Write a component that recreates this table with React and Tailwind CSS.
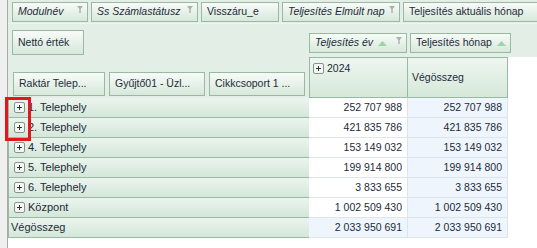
import clsx from 'clsx'

const rows = [
  { name: '1. Telephely', v: '252 707 988' },
  { name: '2. Telephely', v: '421 835 786' },
  { name: '4. Telephely', v: '153 149 032' },
  { name: '5. Telephely', v: '199 914 800' },
  { name: '6. Telephely', v: '3 833 655' },
  { name: 'Központ', v: '1 002 509 430' },
]

const Funnel = () => (
  <svg width="6" height="7" viewBox="0 0 6 7" className="absolute right-[4px] top-[3px]">
    <path d="M0 0h6L3.7 3v4H2.3V3z" fill="#a9b3ab" />
  </svg>
)

const SortUp = () => (
  <svg width="9" height="5" viewBox="0 0 9 5" className="ml-[5px] shrink-0">
    <path d="M0 5L4.5 0L9 5z" fill="#9cd5a7" />
  </svg>
)

const PlusBox = () => (
  <svg width="11" height="11" viewBox="0 0 11 11" className="shrink-0">
    <rect x="0.5" y="0.5" width="10" height="10" rx="1.5" fill="#f3f6f4" stroke="#87928a" />
    <path d="M3 5.5h5M5.5 3v5" stroke="#2c3a32" />
  </svg>
)

function FieldButton({ label, italic, w, h = 'h-[20px]', filter, sort }) {
  return (
    <div className={clsx(
      'relative flex shrink-0 items-center overflow-hidden whitespace-nowrap border border-[#9ab9a3] bg-gradient-to-b from-[#f7fbf8] to-[#d7e8db] pl-[5px]',
      w, h, italic && 'italic'
    )}>
      <span>{label}</span>
      {sort && <SortUp />}
      {filter && <Funnel />}
    </div>
  )
}

export default function App() {
  return (
    <div className="relative flex h-[248px] w-[537px] overflow-hidden bg-white text-[10.5px] text-[#1d2b38]"
      style={{ fontFamily: '"Liberation Sans", Arial, sans-serif' }}>
      {/* left strip */}
      <div className="w-[8px] shrink-0 border-r border-[#a7aba8] bg-[#efefef]" />

      <div className="flex min-w-0 flex-1 flex-col">
        {/* filter + data/column field area */}
        <div className="bg-[#e3eee6]">
          <div className="flex h-[24px] gap-[3px] border-b border-[#edf5ef] pl-[4px] pt-[2px]">
            <FieldButton label="Modulnév" italic filter w="w-[76px]" />
            <FieldButton label="Ss Számlastátusz" italic filter w="w-[107px]" />
            <FieldButton label="Visszáru_e" w="w-[78px]" />
            <FieldButton label="Teljesítés Elmúlt nap" italic filter w="w-[118px]" />
            <FieldButton label="Teljesítés aktuális hónap" w="w-[140px]" />
          </div>
          <div className="flex h-[33px]">
            <div className="w-[301px] shrink-0 pl-[4px] pt-[6px]">
              <FieldButton label="Nettó érték" w="w-[72px]" h="h-[25px]" />
            </div>
            <div className="flex gap-[3px] pt-[9px]">
              <FieldButton label="Teljesítés év" italic sort filter w="w-[98px]" />
              <FieldButton label="Teljesítés hónap" sort w="w-[101px]" />
            </div>
          </div>
        </div>

        {/* row fields + column headers */}
        <div className="flex h-[41px]">
          <div className="flex w-[301px] shrink-0 items-end gap-[4px] bg-[#e3eee6] pb-[2px] pl-[5px]">
            <FieldButton label="Raktár Telep..." w="w-[92px]" h="h-[24px]" />
            <FieldButton label="Gyűjtő01 - Üzl..." w="w-[96px]" h="h-[24px]" />
            <FieldButton label="Cikkcsoport 1 ..." w="w-[96px]" h="h-[24px]" />
          </div>
          <div className="flex w-[99px] shrink-0 items-start gap-[3px] border border-[#9ab9a3] bg-gradient-to-b from-[#eef6f0] to-[#d5e8da] pl-[3px] pt-[5px]">
            <PlusBox />
            <span className="leading-[11px]">2024</span>
          </div>
          <div className="flex w-[100px] shrink-0 items-center border-y border-r border-[#9ab9a3] bg-gradient-to-b from-[#eef6f0] to-[#d5e8da] pl-[4px]">
            Végösszeg
          </div>
          <div className="flex-1 bg-white" />
        </div>

        {/* data rows */}
        {rows.map(r => (
          <div key={r.name} className="flex h-[20px]">
            <div className="flex w-[301px] shrink-0 items-center gap-[3px] border-b border-l border-[#9ab9a3] bg-gradient-to-b from-[#ebf4ee] to-[#d4e7d9] pl-[5px] text-[11px]">
              <PlusBox />
              <span>{r.name}</span>
            </div>
            <div className="flex w-[99px] shrink-0 items-center justify-end border-b border-r border-[#dde4ea] bg-white pr-[5px]">{r.v}</div>
            <div className="flex w-[100px] shrink-0 items-center justify-end border-b border-r border-[#dde4ea] bg-[#eef5fc] pr-[5px]">{r.v}</div>
          </div>
        ))}
        <div className="flex h-[20px]">
          <div className="flex w-[301px] shrink-0 items-center border-b border-l border-[#9ab9a3] bg-gradient-to-b from-[#ebf4ee] to-[#d4e7d9] pl-[2px] text-[11px]">
            Végösszeg
          </div>
          <div className="flex w-[99px] shrink-0 items-center justify-end border-b border-r border-[#dde4ea] bg-[#eef5fc] pr-[5px]">2 033 950 691</div>
          <div className="flex w-[100px] shrink-0 items-center justify-end border-b border-r border-[#dde4ea] bg-[#eef5fc] pr-[5px]">2 033 950 691</div>
        </div>
      </div>

      {/* annotation */}
      <div className="absolute left-[5px] top-[97px] h-[44px] w-[26px] border-[3px] border-[#e3161d]" />
    </div>
  )
}
